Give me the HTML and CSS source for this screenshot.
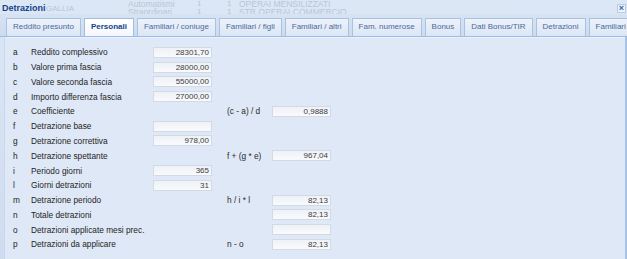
FILE: index.html
```html
<!DOCTYPE html>
<html>
<head>
<meta charset="utf-8">
<link rel="stylesheet" href="styles.css">
</head>
<body>
<div class="win">
  <div class="ghost">
    <span class="g g1">GALLIA</span>
    <span class="g g2">Automatismi</span>
    <span class="g g3">Straordinari</span>
    <span class="g g4">1</span>
    <span class="g g5">1</span>
    <span class="g g6">OPERAI MENSILIZZATI</span>
    <span class="g g7">1</span>
    <span class="g g8">1</span>
    <span class="g g9">STR.OPERAI COMMERCIO</span>
  </div>
  <div class="titlebar">
    <span class="title">Detrazioni</span>
    <span class="close">×</span>
  </div>
  <div class="tabstrip">
    <div class="tab">Reddito presunto</div>
    <div class="tab active">Personali</div>
    <div class="tab">Familiari / coniuge</div>
    <div class="tab">Familiari / figli</div>
    <div class="tab">Familiari / altri</div>
    <div class="tab">Fam. numerose</div>
    <div class="tab">Bonus</div>
    <div class="tab">Dati Bonus/TIR</div>
    <div class="tab">Detrazioni</div>
    <div class="tab">Familiari</div>
  </div>
  <div class="panel">
    <div class="grid">
      <div class="let">a</div><div class="lab">Reddito complessivo</div><div class="box">28301,70</div><div></div><div></div><div></div>
      <div class="let">b</div><div class="lab">Valore prima fascia</div><div class="box">28000,00</div><div></div><div></div><div></div>
      <div class="let">c</div><div class="lab">Valore seconda fascia</div><div class="box">55000,00</div><div></div><div></div><div></div>
      <div class="let">d</div><div class="lab">Importo differenza fascia</div><div class="box">27000,00</div><div></div><div></div><div></div>
      <div class="let">e</div><div class="lab">Coefficiente</div><div></div><div></div><div class="frm">(c - a) / d</div><div class="box">0,9888</div>
      <div class="let">f</div><div class="lab">Detrazione base</div><div class="box"></div><div></div><div></div><div></div>
      <div class="let">g</div><div class="lab">Detrazione correttiva</div><div class="box">978,00</div><div></div><div></div><div></div>
      <div class="let">h</div><div class="lab">Detrazione spettante</div><div></div><div></div><div class="frm">f + (g * e)</div><div class="box">967,04</div>
      <div class="let">i</div><div class="lab">Periodo giorni</div><div class="box">365</div><div></div><div></div><div></div>
      <div class="let">l</div><div class="lab">Giorni detrazioni</div><div class="box">31</div><div></div><div></div><div></div>
      <div class="let">m</div><div class="lab">Detrazione periodo</div><div></div><div></div><div class="frm">h / i * l</div><div class="box">82,13</div>
      <div class="let">n</div><div class="lab">Totale detrazioni</div><div></div><div></div><div></div><div class="box">82,13</div>
      <div class="let">o</div><div class="lab">Detrazioni applicate mesi prec.</div><div></div><div></div><div></div><div class="box"></div>
      <div class="let">p</div><div class="lab">Detrazioni da applicare</div><div></div><div></div><div class="frm">n - o</div><div class="box">82,13</div>
    </div>
  </div>
</div>
</body>
</html>
```

FILE: styles.css
```css
* { box-sizing: border-box; }
html, body {
  margin: 0;
  padding: 0;
  width: 627px;
  height: 259px;
  overflow: hidden;
  background: #dfe8f6;
  font-family: "Liberation Sans", Arial, sans-serif;
}
.win {
  position: relative;
  width: 627px;
  height: 259px;
  display: flex;
  flex-direction: column;
  background: linear-gradient(#dce7f5, #cfdcef);
}
.ghost {
  position: absolute;
  left: 0;
  top: 0;
  width: 627px;
  height: 14px;
  overflow: hidden;
  font-size: 8px;
  color: #b9c5d4;
}
.g { position: absolute; line-height: 8px; }
.g1 { left: 46px; top: 5px; }
.g2 { left: 128px; top: 0; font-size: 8.5px; }
.g3 { left: 128px; top: 8px; font-size: 8.5px; }
.g4 { left: 197px; top: 0; }
.g5 { left: 227px; top: 0; }
.g6 { left: 239px; top: 0; font-size: 8.5px; }
.g7 { left: 197px; top: 8px; }
.g8 { left: 227px; top: 8px; }
.g9 { left: 239px; top: 8px; font-size: 8.5px; }
.titlebar {
  position: relative;
  height: 14px;
  display: flex;
  align-items: center;
  justify-content: space-between;
  padding: 0 1px 0 2px;
}
.title {
  font-weight: bold;
  font-size: 9px;
  color: #15428b;
  line-height: 10px;
  padding-top: 1px;
}
.close {
  width: 9px;
  height: 9px;
  margin-top: 2px;
  background: #eef3fa;
  border: 1px solid #b9cce6;
  color: #3a64a8;
  font-size: 9px;
  font-weight: bold;
  line-height: 7px;
  text-align: center;
}
.tabstrip {
  position: relative;
  height: 23px;
  display: flex;
  gap: 3px;
  padding: 4px 0 0 6px;
  border-bottom: 1px solid #99bbe8;
  background: linear-gradient(#d6e3f3, #ccdcf0);
  overflow: hidden;
  white-space: nowrap;
}
.tab {
  height: 18px;
  padding: 0 6px;
  font-size: 8px;
  line-height: 16px;
  color: #4a6b9c;
  border: 1px solid #aac2e2;
  border-bottom: none;
  background: linear-gradient(#edf2fa, #dbe6f5);
  flex: none;
}
.tab.active {
  color: #15428b;
  font-weight: bold;
  background: linear-gradient(#ffffff, #f4f7fc);
  border-color: #a3bde0;
}
.panel {
  flex: 1;
  margin: 0 2px 0 4px;
  border-left: 1px solid #c8d8ee;
  border-top: 1px solid #edf2fa;
  background: #dfe8f6;
  position: relative;
  padding: 7px 0 0 8px;
}
.panel::after {
  content: "";
  position: absolute;
  right: -2px;
  top: -1px;
  bottom: 0;
  width: 2px;
  background: #a9c3e6;
}
.grid {
  display: grid;
  grid-template-columns: 18px 122px 59px 15px 45px 59px;
  grid-auto-rows: 14.77px;
  align-items: center;
  font-size: 8.3px;
  color: #1e1e1e;
}
.let, .lab, .frm { white-space: nowrap; line-height: 10px; }
.frm { color: #2a2a2a; }
.box {
  height: 11px;
  border: 1px solid #d3dae5;
  background: linear-gradient(#eef1f6, #f9fafc);
  text-align: right;
  padding-right: 2px;
  font-size: 8px;
  line-height: 9px;
  color: #3c3c3c;
}
```
